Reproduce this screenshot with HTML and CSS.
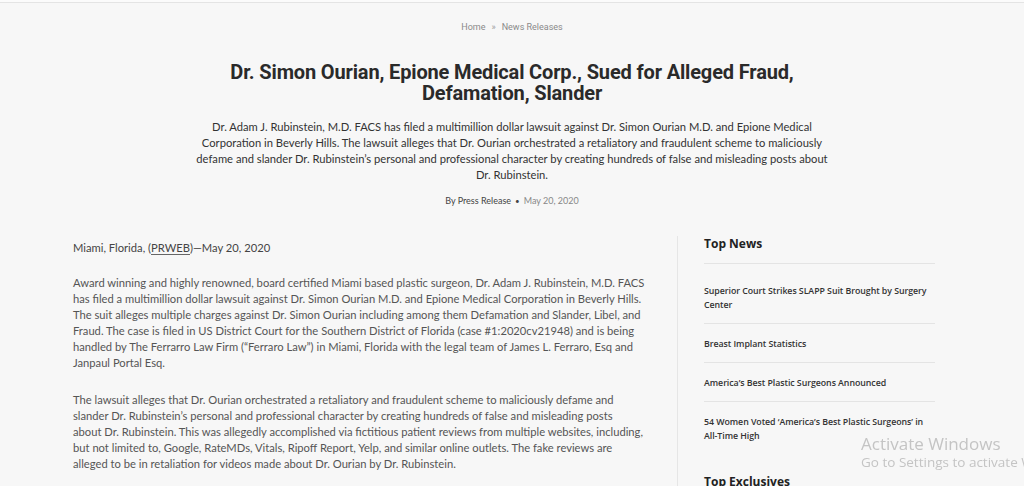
FILE: index.html
```html
<!DOCTYPE html>
<html lang="en">
<head>
<meta charset="utf-8">
<title>Dr. Simon Ourian, Epione Medical Corp., Sued for Alleged Fraud, Defamation, Slander</title>
<link rel="stylesheet" href="styles.css">
</head>
<body>
<div class="topbar"></div>
<header class="article-head">
  <nav class="crumbs"><a href="#">Home</a><span class="sep">»</span><a href="#">News Releases</a></nav>
  <h1 class="title">Dr. Simon Ourian, Epione Medical Corp., Sued for Alleged Fraud, Defamation, Slander</h1>
  <p class="summary">Dr. Adam J. Rubinstein, M.D. FACS has filed a multimillion dollar lawsuit against Dr. Simon Ourian M.D. and Epione Medical Corporation in Beverly Hills. The lawsuit alleges that Dr. Ourian orchestrated a retaliatory and fraudulent scheme to maliciously defame and slander Dr. Rubinstein’s personal and professional character by creating hundreds of false and misleading posts about Dr. Rubinstein.</p>
  <p class="byline"><span class="author">By Press Release</span><span class="dot">•</span><span class="date">May 20, 2020</span></p>
</header>
<div class="layout">
  <article class="content">
    <p class="dateline">Miami, Florida, (<a href="#" class="prweb">PRWEB</a>)—May 20, 2020</p>
    <p>Award winning and highly renowned, board certified Miami based plastic surgeon, Dr. Adam J. Rubinstein, M.D. FACS has filed a multimillion dollar lawsuit against Dr. Simon Ourian M.D. and Epione Medical Corporation in Beverly Hills. The suit alleges multiple charges against Dr. Simon Ourian including among them Defamation and Slander, Libel, and Fraud. The case is filed in US District Court for the Southern District of Florida (case #1:2020cv21948) and is being handled by The Ferrarro Law Firm (“Ferraro Law”) in Miami, Florida with the legal team of James L. Ferraro, Esq and Janpaul Portal Esq.</p>
    <p>The lawsuit alleges that Dr. Ourian orchestrated a retaliatory and fraudulent scheme to maliciously defame and slander Dr. Rubinstein’s personal and professional character by creating hundreds of false and misleading posts about&nbsp;Dr. Rubinstein. This was allegedly accomplished via fictitious patient reviews from multiple websites, including, but&nbsp;not limited to, Google, RateMDs, Vitals, Ripoff Report, Yelp, and similar online outlets. The fake reviews are alleged&nbsp;to be in retaliation for videos made about Dr. Ourian by Dr. Rubinstein.</p>
  </article>
  <aside class="sidebar">
    <h2 class="side-title">Top News</h2>
    <ul class="news-list">
      <li><a href="#">Superior Court Strikes SLAPP Suit Brought by Surgery Center</a></li>
      <li><a href="#">Breast Implant Statistics</a></li>
      <li><a href="#">America’s Best Plastic Surgeons Announced</a></li>
      <li><a href="#">54 Women Voted ‘America’s Best Plastic Surgeons’ in All-Time High</a></li>
    </ul>
    <h2 class="side-title second">Top Exclusives</h2>
  </aside>
</div>
<div class="activate">
  <div class="act-1">Activate Windows</div>
  <div class="act-2">Go to Settings to activate Windows.</div>
</div>
</body>
</html>
```

FILE: styles.css
```css
html, body {
  margin: 0;
  padding: 0;
  background: #f7f7f7;
  height: 486px;
  overflow: hidden;
}
body {
  font-family: "Lato", "Open Sans", sans-serif;
  color: #555;
}
a { color: inherit; text-decoration: none; }

.topbar {
  height: 2px;
  background: #fbfbfb;
  border-bottom: 1px solid #e4e4e4;
}

.article-head {
  width: 640px;
  margin: 0 auto;
  text-align: center;
}
.crumbs {
  padding-top: 18px;
  font-family: "Roboto", sans-serif;
  font-size: 9px;
  line-height: 12px;
  color: #8a8a8a;
}
.crumbs .sep { margin: 0 6px; color: #999; }

.title {
  margin: 29px auto 0;
  width: 600px;
  font-family: "Roboto", "Liberation Sans", sans-serif;
  font-weight: 700;
  font-size: 20px;
  line-height: 21px;
  color: #2a2a2a;
  letter-spacing: -0.15px;
}
.summary {
  margin: 15px 0 0;
  font-size: 11.2px;
  line-height: 16px;
  color: #333;
}
.byline {
  margin: 12px 0 0;
  font-size: 9px;
  line-height: 12px;
  color: #444;
}
.byline .dot { margin: 0 4px; font-size: 8px; }
.byline .date { color: #888; }

.layout {
  display: grid;
  grid-template-columns: 604px 258px;
  padding-left: 73px;
  margin-top: 29px;
}
.content {
  padding-top: 4px;
  font-size: 11.2px;
  line-height: 16px;
  color: #555;
}
.content p { margin: 0 0 21px; max-width: 577px; }
.content .dateline { margin-bottom: 19px; color: #444; }
.prweb { border-bottom: 1px solid #666; }

.sidebar {
  border-left: 1px solid #e6e6e6;
  padding-left: 26px;
  font-family: "Open Sans", sans-serif;
}
.side-title {
  margin: 0;
  font-size: 12px;
  line-height: 16px;
  font-weight: 700;
  color: #222;
  padding-bottom: 11px;
  border-bottom: 1px solid #e4e4e4;
}
.side-title.second { border-bottom: none; margin-top: 31px; }
.news-list { list-style: none; margin: 7px 0 0; padding: 0; }
.news-list li {
  padding: 13px 0 11px;
  border-bottom: 1px solid #e4e4e4;
  font-size: 8.8px;
  line-height: 14px;
  font-weight: 600;
  color: #333;
  letter-spacing: -0.05px;
}
.news-list li:last-child { border-bottom: none; padding-bottom: 0; }

.activate {
  position: fixed;
  left: 861px;
  top: 435px;
  font-family: "Open Sans", sans-serif;
  color: #c4c4c4;
  white-space: nowrap;
}
.act-1 { font-size: 17px; line-height: 18px; }
.act-2 { font-size: 13.5px; line-height: 18px; }
```
